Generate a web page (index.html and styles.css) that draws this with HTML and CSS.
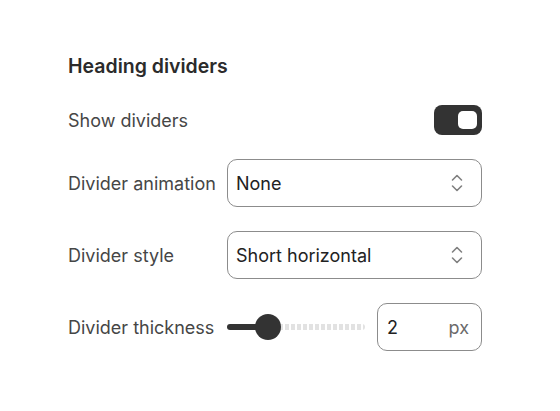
FILE: index.html
```html
<!DOCTYPE html>
<html lang="en">
<head>
<meta charset="utf-8">
<title>Heading dividers</title>
<link rel="stylesheet" href="styles.css">
</head>
<body>
<section class="panel">
  <h2 class="title">Heading dividers</h2>
  <div class="rows">
    <div class="row row-toggle">
      <span class="label">Show dividers</span>
      <span class="toggle"><span class="knob"></span></span>
    </div>
    <div class="row">
      <span class="label">Divider animation</span>
      <div class="select">
        <span class="value">None</span>
        <svg class="chev" width="12" height="20" viewBox="0 0 12 20" fill="none" stroke="currentColor" stroke-width="1.6" stroke-linecap="round" stroke-linejoin="round"><path d="M1.5 7 L6 2.5 L10.5 7"/><path d="M1.5 13 L6 17.5 L10.5 13"/></svg>
      </div>
    </div>
    <div class="row">
      <span class="label">Divider style</span>
      <div class="select">
        <span class="value">Short horizontal</span>
        <svg class="chev" width="12" height="20" viewBox="0 0 12 20" fill="none" stroke="currentColor" stroke-width="1.6" stroke-linecap="round" stroke-linejoin="round"><path d="M1.5 7 L6 2.5 L10.5 7"/><path d="M1.5 13 L6 17.5 L10.5 13"/></svg>
      </div>
    </div>
    <div class="row">
      <span class="label">Divider thickness</span>
      <div class="thickness">
        <div class="slider">
          <span class="fill"></span>
          <span class="thumb"></span>
          <span class="rest"></span>
        </div>
        <div class="number">
          <span class="num">2</span>
          <span class="unit">px</span>
        </div>
      </div>
    </div>
  </div>
</section>
</body>
</html>
```

FILE: styles.css
```css
* { box-sizing: border-box; }

body {
  margin: 0;
  background: #ffffff;
  font-family: Inter, "Noto Sans", sans-serif;
  color: #222;
}

.panel {
  width: 414px;
  margin: 0 0 0 68px;
  padding-top: 54px;
}

.title {
  margin: 0;
  font-size: 19.5px;
  font-weight: 600;
  line-height: 24px;
  color: #2b2b2b;
}

.rows {
  margin-top: 27px;
  display: grid;
  row-gap: 24px;
}

.row {
  display: grid;
  grid-template-columns: 159px 1fr;
  align-items: center;
}

.row-toggle {
  grid-template-columns: 1fr auto;
}

.label {
  font-size: 18px;
  line-height: 26px;
  padding-top: 2px;
  color: #464646;
}

.toggle {
  width: 48px;
  height: 30px;
  border-radius: 8px;
  background: #333333;
  display: flex;
  align-items: center;
  justify-content: flex-end;
  padding-right: 5px;
}

.knob {
  width: 19px;
  height: 18px;
  border-radius: 5px;
  background: #ffffff;
}

.select {
  height: 48px;
  border: 1px solid #8c8c8c;
  border-radius: 10px;
  display: flex;
  align-items: center;
  justify-content: space-between;
  padding: 0 18px 0 8px;
  background: #fff;
}

.value {
  font-size: 18px;
  padding-top: 1px;
  color: #222;
}

.chev {
  color: #808080;
  display: block;
}

.thickness {
  display: flex;
  align-items: center;
  gap: 12px;
}

.slider {
  width: 138px;
  height: 26px;
  display: flex;
  align-items: center;
}

.fill {
  width: 32px;
  height: 6px;
  background: #333;
  border-radius: 3px 0 0 3px;
  margin-right: -4px;
}

.thumb {
  width: 26px;
  height: 26px;
  border-radius: 50%;
  background: #333;
  flex: none;
  position: relative;
  z-index: 1;
}

.rest {
  flex: 1;
  height: 6px;
  margin-left: -2px;
  border-radius: 0 3px 3px 0;
  background: repeating-linear-gradient(90deg, #e2e2e2 0 4px, transparent 4px 6px);
}

.number {
  width: 105px;
  height: 48px;
  border: 1px solid #8c8c8c;
  border-radius: 10px;
  display: flex;
  align-items: center;
  justify-content: space-between;
  padding: 0 12px 0 9px;
}

.num {
  font-size: 18px;
  padding-top: 1px;
  color: #222;
}

.unit {
  font-size: 18px;
  padding-top: 1px;
  color: #6a6a6a;
}
```
